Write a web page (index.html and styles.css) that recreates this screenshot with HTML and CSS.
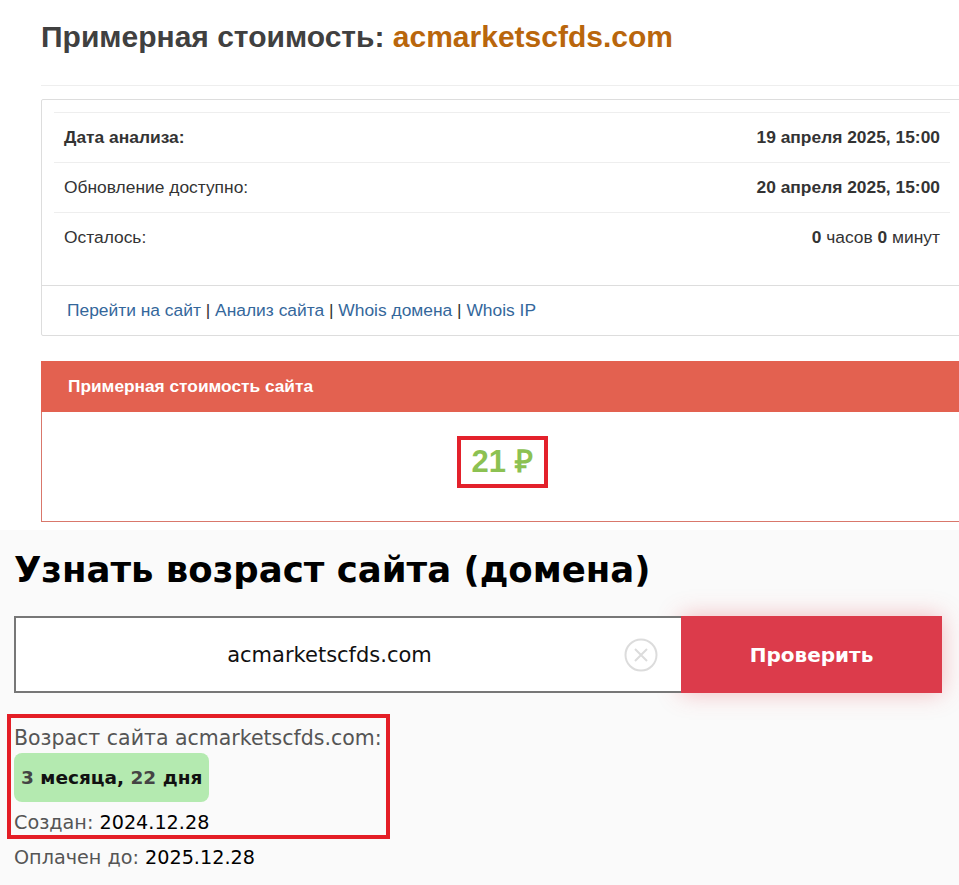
FILE: index.html
```html
<!DOCTYPE html>
<html lang="ru">
<head>
<meta charset="utf-8">
<title>Примерная стоимость: acmarketscfds.com</title>
<link rel="stylesheet" href="styles.css">
</head>
<body>
<div class="top">
  <h1 class="title">Примерная стоимость: <span class="domain">acmarketscfds.com</span></h1>
  <div class="rule"></div>
  <div class="infobox">
    <div class="infobody">
      <table class="info">
        <tr><td class="lbl strong">Дата анализа:</td><td class="val"><b>19 апреля 2025, 15:00</b></td></tr>
        <tr><td class="lbl">Обновление доступно:</td><td class="val"><b>20 апреля 2025, 15:00</b></td></tr>
        <tr><td class="lbl">Осталось:</td><td class="val"><b>0</b> часов <b>0</b> минут</td></tr>
      </table>
    </div>
    <div class="infofoot">
      <a href="#">Перейти на сайт</a> | <a href="#">Анализ сайта</a> | <a href="#">Whois домена</a> | <a href="#">Whois IP</a>
    </div>
  </div>
  <div class="panel">
    <div class="panelhead">Примерная стоимость сайта</div>
    <div class="panelbody">
      <div class="price">21 ₽</div>
    </div>
  </div>
</div>
<div class="age">
  <h2 class="agetitle">Узнать возраст сайта (домена)</h2>
  <div class="form">
    <div class="field">
      <span class="fieldtext">acmarketscfds.com</span>
      <svg class="clear" width="34" height="34" viewBox="0 0 34 34"><circle cx="17" cy="17" r="15.5" fill="none" stroke="#dcdcdc" stroke-width="2"/><path d="M11 11 L23 23 M23 11 L11 23" stroke="#dcdcdc" stroke-width="2" fill="none"/></svg>
    </div>
    <div class="btn">Проверить</div>
  </div>
  <div class="result">
    <div class="line first grey">Возраст сайта acmarketscfds.com:</div>
    <div class="badge"><b class="num">3</b> месяца, <b class="num">22</b> дня</div>
    <div class="line third"><span class="grey">Создан:</span> 2024.12.28</div>
  </div>
  <div class="line paid"><span class="grey">Оплачен до:</span> 2025.12.28</div>
</div>
</body>
</html>
```
FILE: styles.css
```css
html, body { margin: 0; padding: 0; overflow-x: hidden; }
body { background: #fafafa; font-family: "Liberation Sans", Arial, sans-serif; }
.top { background: #fff; padding: 0 0 8px 41px; width: 922px; }
.title { margin: 0; padding-top: 19px; font-size: 30px; line-height: 36px; font-weight: bold; color: #404040; }
.domain { color: #b9660c; }
.rule { height: 1px; background: #eeeeee; margin-top: 30px; }
.infobox { margin-top: 13px; border: 1px solid #dddddd; border-radius: 2px; }
.infobody { padding: 12px 12px 23px 12px; }
.info { width: 100%; border-collapse: collapse; font-size: 17.4px; color: #333; }
.info td { border-top: 1px solid #eeeeee; padding: 0 10px; height: 49px; }
.lbl.strong { font-weight: bold; }
.val { text-align: right; }
.infofoot { border-top: 1px solid #dddddd; padding: 0 25px; height: 49px; line-height: 49px; font-size: 17.4px; color: #333; }
.infofoot a { color: #34679b; text-decoration: none; }
.panel { margin-top: 25px; border: 1px solid #d9776b; border-top: none; }
.panelhead { background: #e36150; color: #fff; font-weight: bold; font-size: 17.3px; height: 51px; line-height: 51px; padding-left: 27px; margin-left: -1px; margin-right: -1px; }
.panelbody { height: 109px; display: flex; justify-content: center; align-items: flex-start; }
.price { margin-top: 24px; border: 4px solid #e3212b; width: 83px; height: 44px; box-sizing: content-box; color: #8cc152; font-size: 31px; font-weight: bold; line-height: 44px; text-align: center; }
.age { font-family: "DejaVu Sans", sans-serif; padding: 0 14px 20px 14px; }
.agetitle { margin: 0; padding-top: 17px; font-size: 35.5px; line-height: 46px; font-weight: bold; color: #000; }
.form { margin-top: 23px; display: flex; height: 77px; }
.field { width: 667px; border: 2px solid #777; border-right: none; background: #fff; display: flex; align-items: center; position: relative; box-sizing: border-box; }
.fieldtext { flex: 1; text-align: center; font-size: 21px; color: #111; padding-right: 38px; }
.clear { position: absolute; right: 23px; top: 20px; }
.btn { width: 261px; background: #dc3b4b; color: #fff; font-weight: bold; font-size: 20px; display: flex; align-items: center; justify-content: center; box-shadow: 0 0 22px rgba(230, 70, 80, 0.35); }
.result { margin-top: 21px; margin-left: -7px; display: inline-block; border: 4px solid #e41e26; padding: 0 4px 0 3px; }
.line { font-size: 19.2px; color: #000; line-height: 30px; }
.line.first { font-size: 20.5px; padding-top: 5px; }
.line.third { height: 33px; padding-top: 10px; line-height: 22px; box-sizing: border-box; }
.grey { color: #555; }
.badge { display: block; width: fit-content; background: #b4eab0; border-radius: 8px; height: 49px; line-height: 49px; padding: 0 7px; font-size: 18.5px; font-weight: 600; color: #111; }
.num { color: #444; }
.paid { margin-top: 4px; }
```
